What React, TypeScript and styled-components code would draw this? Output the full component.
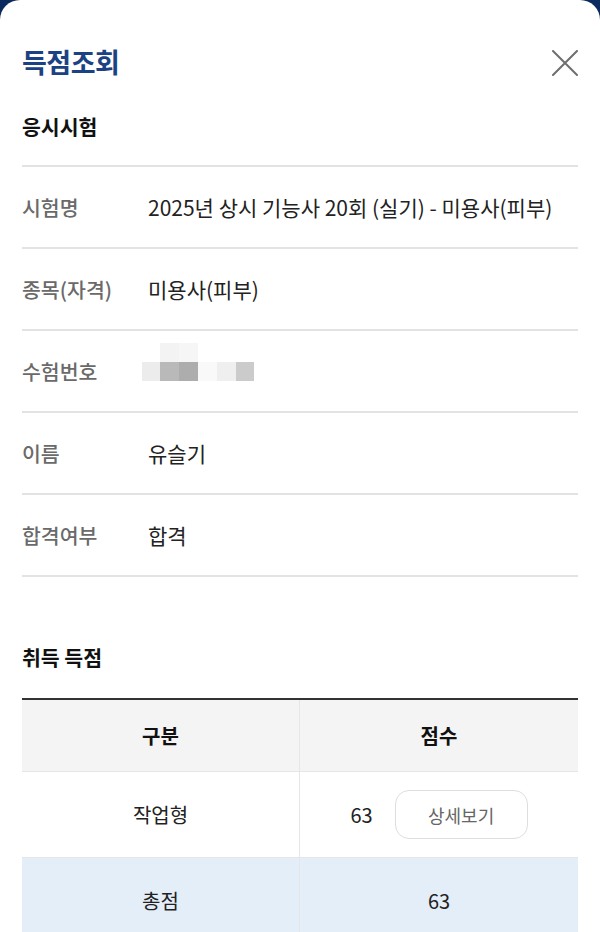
import React from 'react'
import styled, { createGlobalStyle } from 'styled-components'

const GlobalStyle = createGlobalStyle`
  html, body {
    margin: 0;
    padding: 0;
    height: 932px;
    overflow: hidden;
    background-color: #0b2a5e;
    font-family: "Noto Sans CJK KR", "Noto Sans", sans-serif;
  }
  * {
    box-sizing: border-box;
  }
`

const Page = styled.div`
  display: flex;
  flex-direction: column;
  width: 600px;
  height: 932px;
  overflow: hidden;
`

const BackBar = styled.div`
  display: flex;
  align-items: flex-end;
  justify-content: flex-end;
  height: 4px;
  padding: 0 24px;
  overflow: hidden;
`

const BackIcon = styled.span`
  width: 22px;
  height: 22px;
  border: 2px solid rgba(255, 255, 255, 0.5);
  border-radius: 50%;
  margin-bottom: -2px;
`

const Sheet = styled.div`
  flex: 1;
  display: flex;
  flex-direction: column;
  background-color: white;
  border-radius: 20px 20px 0 0;
  padding: 43px 22px 0;
`

const TitleRow = styled.div`
  display: flex;
  align-items: center;
  justify-content: space-between;
  height: 36px;
`

const Title = styled.h1`
  margin: 0;
  font-size: 27px;
  font-weight: 700;
  letter-spacing: -0.5px;
  color: #1b4384;
`

const CloseButton = styled.button`
  display: flex;
  align-items: center;
  justify-content: center;
  width: 30px;
  height: 30px;
  padding: 0;
  margin-right: -2px;
  margin-top: 4px;
  border: none;
  background: none;
`

const SectionTitle = styled.h2<{ $top: number; $bottom: number }>`
  margin: ${p => p.$top}px 0 ${p => p.$bottom}px;
  font-size: 20.5px;
  line-height: 26px;
  font-weight: 700;
  color: #111;
`

const InfoList = styled.div`
  display: flex;
  flex-direction: column;
  border-top: 2px solid #e3e3e3;
`

const InfoRow = styled.div`
  display: flex;
  align-items: center;
  height: 82px;
  border-bottom: 2px solid #e3e3e3;
`

const Label = styled.div`
  width: 126px;
  flex-shrink: 0;
  font-size: 20.5px;
  font-weight: 500;
  color: #6a6a6a;
`

const Value = styled.div`
  display: flex;
  align-items: center;
  font-size: 21px;
  color: #222;
  white-space: nowrap;
`

const Mosaic = styled.svg`
  margin-left: -6px;
`

const ScoreTable = styled.div`
  display: grid;
  grid-template-columns: 1fr 1fr;
  border-top: 2px solid #333;
`

const Cell = styled.div<{ $height: number; $bg: string; $head?: boolean; $left?: boolean }>`
  display: flex;
  align-items: center;
  justify-content: center;
  gap: 22px;
  height: ${p => p.$height}px;
  background-color: ${p => p.$bg};
  border-bottom: 1px solid #e6e6e6;
  border-right: ${p => (p.$left ? '1.5px solid #e6e6e6' : 'none')};
  font-size: 20px;
  font-weight: ${p => (p.$head ? 700 : 400)};
  color: ${p => (p.$head ? '#111' : '#222')};
`

const DetailButton = styled.button`
  width: 133px;
  height: 49px;
  border: 1.5px solid #dedede;
  border-radius: 14px;
  background: white;
  font-family: inherit;
  font-size: 18px;
  color: #666;
`

const CloseIcon = () => (
  <svg width="26" height="26" viewBox="0 0 26 26">
    <path d="M1 1 L25 25 M25 1 L1 25" stroke="#6e6e6e" strokeWidth="2" strokeLinecap="round" />
  </svg>
)

const mosaicBlocks = [
  { x: 18, y: 0, c: '#f3f3f3' },
  { x: 37, y: 0, c: '#f6f6f6' },
  { x: 0, y: 19, c: '#ececec' },
  { x: 18, y: 19, c: '#b9b9b9' },
  { x: 37, y: 19, c: '#adadad' },
  { x: 56, y: 19, c: '#f9f9f9' },
  { x: 75, y: 19, c: '#efefef' },
  { x: 94, y: 19, c: '#cbcbcb' },
]

const MaskedNumber = () => (
  <Mosaic width="112" height="56" viewBox="0 0 112 56">
    {mosaicBlocks.map((b, i) => (
      <rect key={i} x={b.x} y={b.y} width="19" height="19" fill={b.c} />
    ))}
  </Mosaic>
)

const infoRows: { label: string; value: React.ReactNode }[] = [
  { label: '시험명', value: '2025년 상시 기능사 20회 (실기) - 미용사(피부)' },
  { label: '종목(자격)', value: '미용사(피부)' },
  { label: '수험번호', value: <MaskedNumber /> },
  { label: '이름', value: '유슬기' },
  { label: '합격여부', value: '합격' },
]

function App() {
  return (
    <Page>
      <GlobalStyle />
      <BackBar>
        <BackIcon />
      </BackBar>
      <Sheet>
        <TitleRow>
          <Title>득점조회</Title>
          <CloseButton aria-label="닫기">
            <CloseIcon />
          </CloseButton>
        </TitleRow>

        <SectionTitle $top={34} $bottom={26}>응시시험</SectionTitle>
        <InfoList>
          {infoRows.map(row => (
            <InfoRow key={row.label}>
              <Label>{row.label}</Label>
              <Value>{row.value}</Value>
            </InfoRow>
          ))}
        </InfoList>

        <SectionTitle $top={67} $bottom={28}>취득 득점</SectionTitle>
        <ScoreTable>
          <Cell $height={72} $bg="#f4f4f4" $head $left>구분</Cell>
          <Cell $height={72} $bg="#f4f4f4" $head>점수</Cell>
          <Cell $height={86} $bg="white" $left>작업형</Cell>
          <Cell $height={86} $bg="white">
            <span>63</span>
            <DetailButton>상세보기</DetailButton>
          </Cell>
          <Cell $height={86} $bg="#e4eef9" $left>총점</Cell>
          <Cell $height={86} $bg="#e4eef9">63</Cell>
        </ScoreTable>
      </Sheet>
    </Page>
  )
}

export default App
